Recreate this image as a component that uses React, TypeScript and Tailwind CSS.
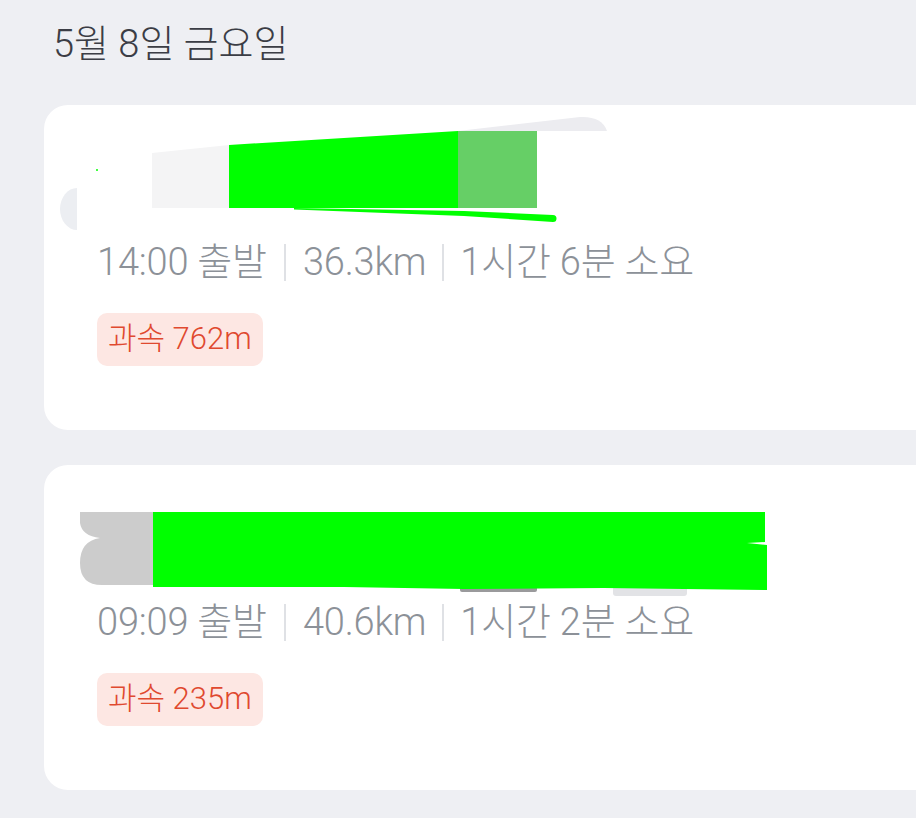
import React from 'react'

const trips = [
  { start: '14:00', dist: '36.3km', dur: '1시간 6분', speeding: '762m', mask: 'a' },
  { start: '09:09', dist: '40.6km', dur: '1시간 2분', speeding: '235m', mask: 'b' },
]

// 지도 영역 가림 처리 (스크린샷의 마스킹 표시)
function MaskA() {
  return (
    <svg className="absolute left-0 top-0" width="620" height="135" viewBox="0 0 620 135">
      <path d="M33,83 A17,21 0 0,0 33,125 Z" fill="#eceef2" />
      <path d="M108,48 L185,40 L185,103 L108,103 Z" fill="#f4f4f5" />
      <path d="M414,26 L536,12 Q558,11 563,26 Z" fill="#ececf0" />
      <path d="M185,40 L414,26 L414,103 L185,103 Z" fill="#00ff00" />
      <rect x="414" y="26" width="79" height="77" fill="#66cf66" />
      <path
        d="M250,103 L420,106 L509,110 A3.5,3.5 0 0 1 509,117 L420,111 L250,104.5 Z"
        fill="#00ff00"
      />
      <circle cx="53" cy="65" r="1" fill="#00ff00" />
    </svg>
  )
}

function MaskB() {
  return (
    <svg className="absolute left-0 top-0" width="760" height="135" viewBox="0 0 760 135">
      <rect x="416" y="121" width="77" height="6" rx="2" fill="#9a9a9c" />
      <rect x="569" y="121" width="74" height="10" rx="3" fill="#e2e3e6" />
      <path
        d="M36,47 L109,47 L109,120 L58,120 Q36,120 36,98 Q36,76 56,73 Q38,71 36,58 Z"
        fill="#cccccc"
      />
      <path
        d="M109,47 L400,47 L721,47 L721,77 L703,78 L723,80 L723,125 L560,123 L420,124 L300,122 L109,122 Z"
        fill="#00ff00"
      />
    </svg>
  )
}

export default function App() {
  return (
    <div
      className="min-h-screen w-full overflow-hidden bg-[#eeeff3] pb-10"
      style={{ fontFamily: 'Roboto, "Noto Sans CJK KR", sans-serif' }}
    >
      <h1 className="pl-[53px] pt-[22px] h-[105px] text-[38px] leading-[44px] font-light text-[#3b3d45]">
        5월 8일 금요일
      </h1>

      <div className="flex flex-col gap-[35px] pl-[44px]">
        {trips.map((trip) => (
          <div key={trip.start} className="w-[900px] rounded-[24px] bg-white pb-[64px]">
            <div className="relative h-[135px]">
              {trip.mask === 'a' ? <MaskA /> : <MaskB />}
            </div>

            <div className="flex items-center pl-[53px] h-[44px] text-[38px] font-light tracking-[-0.2px] text-[#8c9198] whitespace-nowrap">
              <span>{trip.start} 출발</span>
              <span className="mx-[17px] w-[2px] h-[37px] bg-[#dfe1e5]" />
              <span>{trip.dist}</span>
              <span className="mx-[16px] w-[2px] h-[37px] bg-[#dfe1e5]" />
              <span>{trip.dur} 소요</span>
            </div>

            <div className="pl-[53px] mt-[29px]">
              <span className="inline-flex items-center h-[53px] px-[11px] rounded-[10px] bg-[#fde7e3] text-[31px] font-light text-[#e0492f]">
                과속 {trip.speeding}
              </span>
            </div>
          </div>
        ))}
      </div>
    </div>
  )
}
